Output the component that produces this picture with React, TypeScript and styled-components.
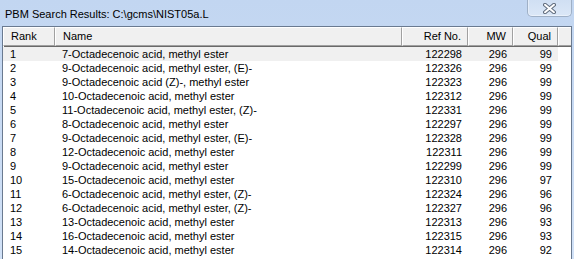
import styled, { createGlobalStyle } from "styled-components";

const GlobalStyle = createGlobalStyle`
  html, body {
    margin: 0;
    padding: 0;
    background: #c9dbf3;
  }
  * {
    box-sizing: border-box;
  }
`;

type Align = "left" | "right";

const COLUMNS = [
  { key: "rank", label: "Rank", width: 52, align: "left" as Align },
  { key: "name", label: "Name", width: 347, align: "left" as Align },
  { key: "ref", label: "Ref No.", width: 66, align: "right" as Align },
  { key: "mw", label: "MW", width: 45, align: "right" as Align },
  { key: "qual", label: "Qual", width: 45, align: "right" as Align },
];

const RESULTS = [
  ["1", "7-Octadecenoic acid, methyl ester", "122298", "296", "99"],
  ["2", "9-Octadecenoic acid, methyl ester, (E)-", "122326", "296", "99"],
  ["3", "9-Octadecenoic acid (Z)-, methyl ester", "122323", "296", "99"],
  ["4", "10-Octadecenoic acid, methyl ester", "122312", "296", "99"],
  ["5", "11-Octadecenoic acid, methyl ester, (Z)-", "122331", "296", "99"],
  ["6", "8-Octadecenoic acid, methyl ester", "122297", "296", "99"],
  ["7", "9-Octadecenoic acid, methyl ester, (E)-", "122328", "296", "99"],
  ["8", "12-Octadecenoic acid, methyl ester", "122311", "296", "99"],
  ["9", "9-Octadecenoic acid, methyl ester", "122299", "296", "99"],
  ["10", "15-Octadecenoic acid, methyl ester", "122310", "296", "97"],
  ["11", "6-Octadecenoic acid, methyl ester, (Z)-", "122324", "296", "96"],
  ["12", "6-Octadecenoic acid, methyl ester, (Z)-", "122327", "296", "96"],
  ["13", "13-Octadecenoic acid, methyl ester", "122313", "296", "93"],
  ["14", "16-Octadecenoic acid, methyl ester", "122315", "296", "93"],
  ["15", "14-Octadecenoic acid, methyl ester", "122314", "296", "92"],
];

const GRID = COLUMNS.map((c) => `${c.width}px`).join(" ") + " 1fr";

const Window = styled.div`
  width: 574px;
  height: 259px;
  display: flex;
  flex-direction: column;
  overflow: hidden;
  background: linear-gradient(180deg, #c2d6f1 0%, #cadcf4 60%, #d2e2f7 100%);
  font-family: "Liberation Sans", Arial, sans-serif;
  color: #000;
`;

const TitleBar = styled.div`
  height: 26px;
  flex: none;
  display: flex;
  align-items: flex-start;
  justify-content: space-between;
  padding: 0 2px 0 5px;
`;

const Caption = styled.div`
  font-size: 11px;
  line-height: 14px;
  padding-top: 7px;
  color: #000;
`;

const CloseButton = styled.div`
  width: 45px;
  height: 17px;
  display: flex;
  align-items: center;
  justify-content: center;
  border: 1px solid #9fb0c6;
  border-top: none;
  border-radius: 0 0 5px 5px;
  background: linear-gradient(180deg, #d0dff3 0%, #dbe7f7 100%);
  box-shadow: inset 0 -1px 0 #eaf1fb, inset 1px 0 0 #e4edf9;
`;

const ListView = styled.div`
  flex: 1;
  margin: 0 2px;
  border: 1px solid #6a7a90;
  border-bottom: none;
  background: #fff;
  display: flex;
  flex-direction: column;
  overflow: hidden;
`;

const HeaderRow = styled.div`
  display: grid;
  grid-template-columns: ${GRID};
  height: 19px;
  flex: none;
`;

const HeaderCell = styled.div<{ $align: Align }>`
  background: #f0f0f0;
  border-top: 1px solid #ffffff;
  border-left: 1px solid #ffffff;
  border-right: 1px solid #a0a0a0;
  border-bottom: 1px solid #a0a0a0;
  box-shadow: 1px 1px 0 #696969;
  font-size: 11px;
  line-height: 16px;
  padding: 0 6px 0 7px;
  text-align: ${(p) => p.$align};
  white-space: nowrap;
  overflow: hidden;
`;

const Body = styled.div`
  display: flex;
  flex-direction: column;
  padding-top: 1px;
`;

const Row = styled.div`
  display: grid;
  grid-template-columns: ${GRID};
  height: 14px;
  flex: none;
`;

const Cell = styled.div<{ $align: Align; $selected: boolean }>`
  background: ${(p) => (p.$selected ? "#f0f0f0" : "transparent")};
  font-size: 11px;
  line-height: 14px;
  padding: 0 6px 0 7px;
  text-align: ${(p) => p.$align};
  white-space: nowrap;
  overflow: hidden;
`;

const CloseGlyph = () => (
  <svg width="13" height="11" viewBox="0 0 13 11">
    <path
      d="M2 1.8 L11 9.2 M11 1.8 L2 9.2"
      stroke="#5f6b7c"
      strokeWidth="4"
      strokeLinecap="round"
    />
    <path
      d="M2 1.8 L11 9.2 M11 1.8 L2 9.2"
      stroke="#ffffff"
      strokeWidth="2"
      strokeLinecap="round"
    />
  </svg>
);

export default function App() {
  return (
    <>
      <GlobalStyle />
      <Window>
        <TitleBar>
          <Caption>PBM Search Results: C:\gcms\NIST05a.L</Caption>
          <CloseButton>
            <CloseGlyph />
          </CloseButton>
        </TitleBar>
        <ListView>
          <HeaderRow>
            {COLUMNS.map((c) => (
              <HeaderCell key={c.key} $align={c.align}>
                {c.label}
              </HeaderCell>
            ))}
            <HeaderCell $align="left" />
          </HeaderRow>
          <Body>
            {RESULTS.map((r, i) => (
              <Row key={r[0]}>
                {COLUMNS.map((c, j) => (
                  <Cell key={c.key} $align={c.align} $selected={i === 0}>
                    {r[j]}
                  </Cell>
                ))}
                <Cell $align="left" $selected={false} />
              </Row>
            ))}
          </Body>
        </ListView>
      </Window>
    </>
  );
}
